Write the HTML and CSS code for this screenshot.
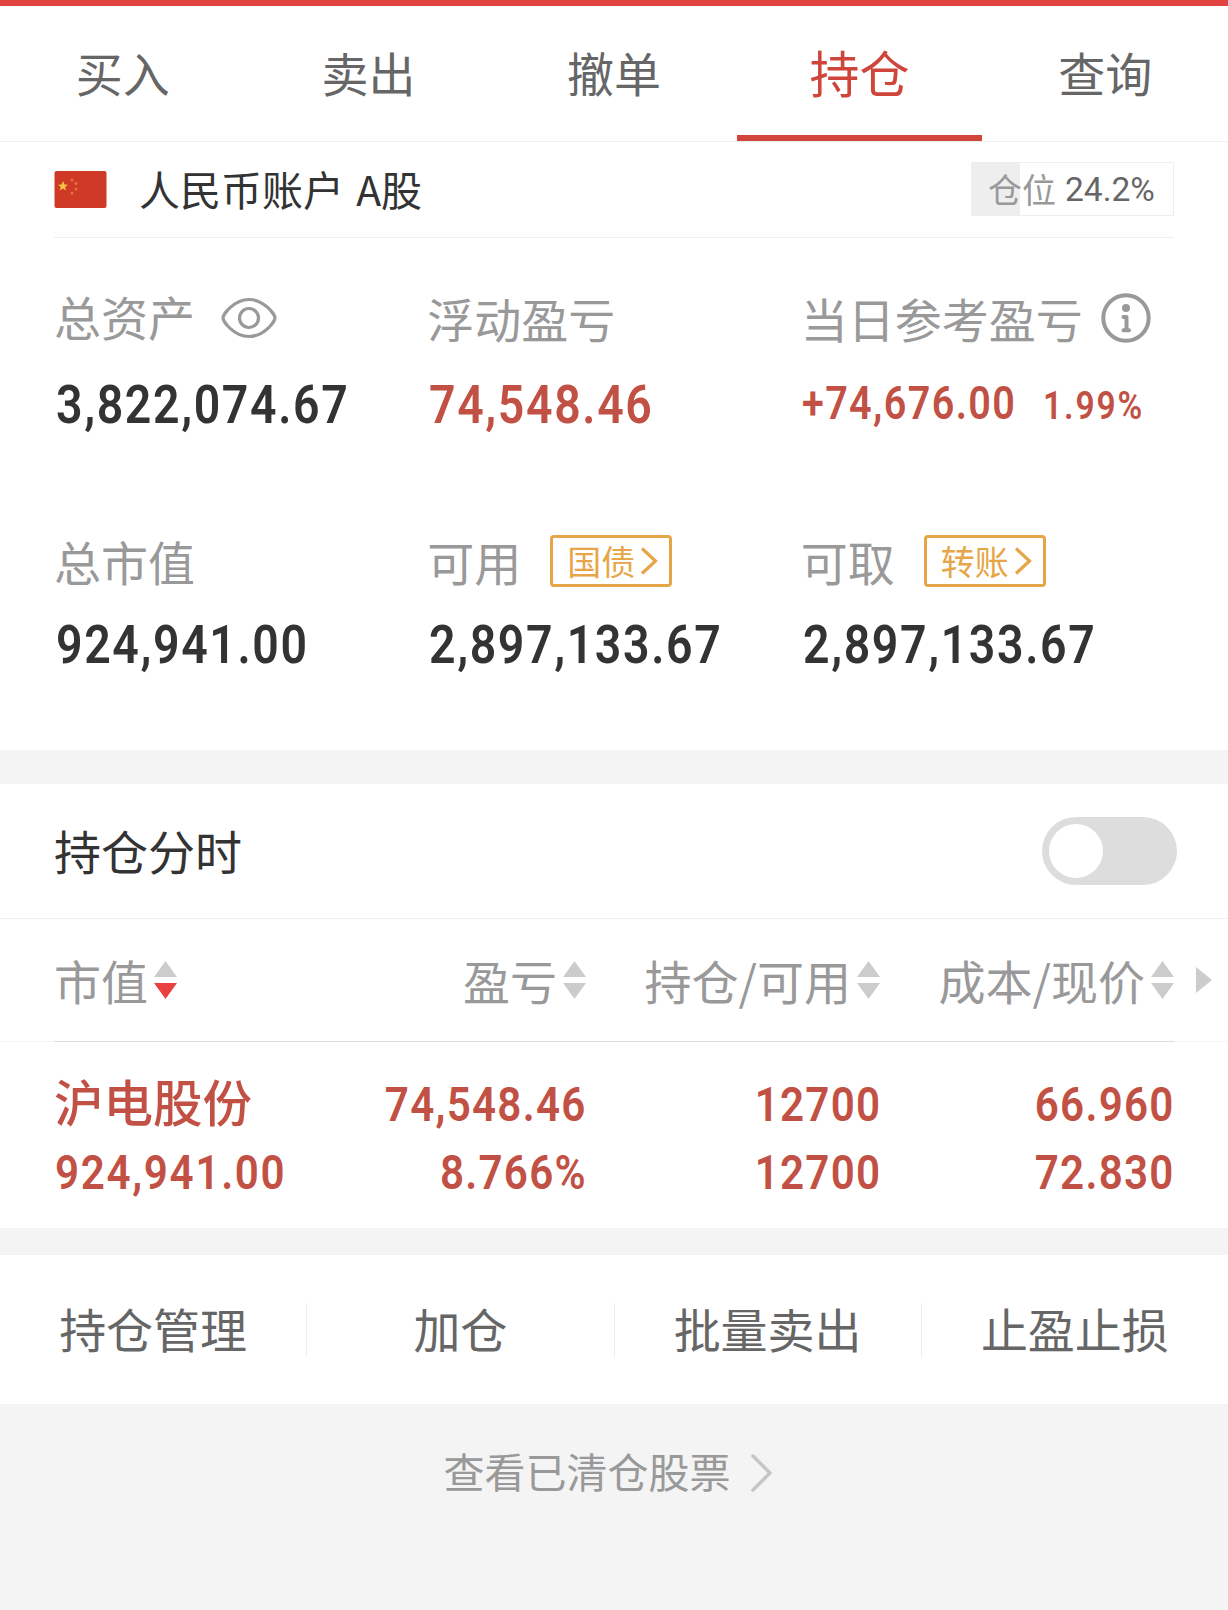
FILE: index.html
```html
<!DOCTYPE html>
<html lang="zh-CN">
<head>
    <meta charset="UTF-8">
    <meta name="viewport" content="width=device-width, initial-scale=1.0">
    <title>持仓</title>
    <link rel="stylesheet" href="styles.css">
</head>
<body>
    <nav class="tabs">
        <a class="tab">买入</a>
        <a class="tab">卖出</a>
        <a class="tab">撤单</a>
        <a class="tab active">持仓</a>
        <a class="tab">查询</a>
    </nav>

    <section class="account">
        <div class="account-head">
            <svg class="flag" viewBox="0 0 52 37">
                <rect width="52" height="37" rx="2" fill="#cf3a26"/>
                <path d="M8.500 10l1.400 3.500 3.600.2-2.800 2.300 1 3.500-3.200-2-3.200 2 1-3.500-2.800-2.300 3.600-.2z" fill="#f6c544"/>
                <g fill="#e2733a">
                    <circle cx="17.5" cy="9" r="1.5"/>
                    <circle cx="21.5" cy="12.5" r="1.5"/>
                    <circle cx="21.5" cy="18" r="1.5"/>
                    <circle cx="17.5" cy="22" r="1.5"/>
                </g>
            </svg>
            <span class="account-name">人民币账户 A股</span>
            <div class="position"><span>仓位</span><b>24.2%</b></div>
        </div>

        <div class="assets">
            <div class="asset">
                <div class="label raised">总资产
                    <svg class="eye" viewBox="0 0 56 42" fill="none" stroke="#999" stroke-width="3.2">
                        <path d="M2 21C2 17.500 13 2.500 28 2.500S54 17.500 54 21S43 39.500 28 39.500S2 24.500 2 21z"/>
                        <circle cx="28" cy="21" r="9.5"/>
                    </svg>
                </div>
                <div class="value"><span class="num">3,822,074.67</span></div>
            </div>
            <div class="asset">
                <div class="label">浮动盈亏</div>
                <div class="value red"><span class="num">74,548.46</span></div>
            </div>
            <div class="asset">
                <div class="label">当日参考盈亏
                    <svg class="info" viewBox="0 0 50 50">
                        <circle cx="25" cy="25" r="22.7" fill="none" stroke="#999" stroke-width="4"/>
                        <circle cx="25" cy="15" r="4" fill="#999"/>
                        <path d="M22.500 24h3v13M22.500 37.200h5.500" fill="none" stroke="#999" stroke-width="4" stroke-linecap="round" stroke-linejoin="round"/>
                    </svg>
                </div>
                <div class="value day red"><span class="num">+74,676.00</span><span class="num rate">1.99%</span></div>
            </div>
            <div class="asset">
                <div class="label">总市值</div>
                <div class="value"><span class="num">924,941.00</span></div>
            </div>
            <div class="asset">
                <div class="label">可用
                    <a class="tag">国债<svg viewBox="0 0 18 28"><path d="M2 1.500l13.500 12.500L2 26.500"/></svg></a>
                </div>
                <div class="value"><span class="num">2,897,133.67</span></div>
            </div>
            <div class="asset">
                <div class="label">可取
                    <a class="tag">转账<svg viewBox="0 0 18 28"><path d="M2 1.500l13.500 12.500L2 26.500"/></svg></a>
                </div>
                <div class="value"><span class="num">2,897,133.67</span></div>
            </div>
        </div>
    </section>

    <section class="holdings">
        <div class="chart-row">
            <span>持仓分时</span>
            <div class="switch"></div>
        </div>

        <div class="grid head">
            <div>市值<i class="sort desc"></i></div>
            <div>盈亏<i class="sort"></i></div>
            <div>持仓/可用<i class="sort"></i></div>
            <div>成本/现价<i class="sort"></i></div>
            <i class="more"></i>
        </div>

        <div class="grid stock">
            <div class="name">沪电股份</div>
            <div><span class="num">74,548.46</span></div>
            <div><span class="num">12700</span></div>
            <div><span class="num">66.960</span></div>
            <div class="amount"><span class="num">924,941.00</span></div>
            <div><span class="num">8.766%</span></div>
            <div><span class="num">12700</span></div>
            <div><span class="num">72.830</span></div>
        </div>
    </section>

    <div class="actions">
        <a>持仓管理</a>
        <a>加仓</a>
        <a>批量卖出</a>
        <a>止盈止损</a>
    </div>

    <a class="cleared">查看已清仓股票
        <svg viewBox="0 0 22 38"><path d="M2 2l17 17L2 36"/></svg>
    </a>
</body>
</html>
```
FILE: styles.css
```css
* { box-sizing: border-box; }
body { margin: 0; background: #f4f4f4; color: #333; font-family: "Noto Sans CJK SC", sans-serif; font-size: 47px; }
svg { display: block; flex: none; }
.red { color: #c25145; }

/* narrow DIN-like digits */
.num { display: inline-block; font-family: Roboto, sans-serif; font-weight: 600; letter-spacing: 0.035em; transform: scaleX(0.86); transform-origin: left center; white-space: nowrap; }

.tabs { display: flex; height: 142px; border-top: 6px solid #e04340; border-bottom: 1px solid #eee; background: #fff; }
.tab { flex: 1; height: 135px; line-height: 132px; text-align: center; color: #666; }
.tab.active { font-size: 50px; line-height: 130px; color: #cf453c; border-bottom: 6px solid #d1453b; }

.account { height: 608px; padding: 0 54px; background: #fff; }
.account-head { display: flex; align-items: center; height: 96px; border-bottom: 1px solid #eee; }
.flag { width: 53px; height: 37px; }
.account-name { margin-left: 32px; padding-bottom: 4px; font-size: 41px; line-height: 90px; word-spacing: 3px; }
.position { display: flex; align-items: center; width: 203px; height: 54px; margin-left: auto; margin-bottom: 2px; padding-left: 16px; border: 1px solid #eee; background: linear-gradient(90deg, #eee 24%, #fff 24%); font-size: 34px; line-height: 48px; color: #999; }
.position b { margin: 2px 0 0 9px; font-family: Roboto, sans-serif; font-weight: 400; font-size: 33.5px; color: #666; }

.assets { display: grid; grid-template-columns: repeat(3, 1fr); row-gap: 101px; padding-top: 50px; }
.label { display: flex; align-items: center; height: 60px; line-height: 60px; color: #999; }
.label.raised { padding-bottom: 4px; }
.eye { width: 56px; height: 42px; margin-left: 26px; margin-top: 4px; }
.info { width: 50px; height: 50px; margin-left: 18px; }
.value { height: 60px; margin-top: 22px; padding-left: 2px; font-size: 54px; line-height: 60px; }
.asset:nth-child(n+4) .value { margin-top: 19px; }
.value.day { display: flex; align-items: baseline; font-size: 46px; line-height: 67px; padding-left: 1px; }
.value .rate { margin-left: -8px; font-size: 39px; letter-spacing: 0.055em; }

.tag { display: flex; align-items: center; width: 122px; height: 52px; margin-left: 29px; padding-left: 14px; border: 3px solid #e6a547; border-radius: 4px; font-size: 34px; line-height: 40px; color: #e6a547; }
.tag svg { width: 18px; height: 28px; margin-left: 5px; fill: none; stroke: #e6a547; stroke-width: 3.2; }

.holdings { margin-top: 34px; background: #fff; }
.chart-row { display: flex; justify-content: space-between; align-items: center; height: 135px; padding: 0 51px 0 54px; border-bottom: 1px solid #eee; line-height: 60px; }
.chart-row span { padding-bottom: 3px; }
.switch { width: 135px; height: 68px; padding: 7px; border-radius: 34px; background: #ddd; }
.switch::before { content: ""; display: block; width: 54px; height: 54px; border-radius: 50%; background: #fff; }

.grid { display: grid; grid-template-columns: 238px repeat(3, 294px); padding-left: 54px; }
.head { grid-template-columns: 238px repeat(3, 294px) 54px; height: 123px; padding-bottom: 1px; align-items: center; background: linear-gradient(#ddd, #ddd) 54px 100% / 1120px 1px no-repeat, linear-gradient(#f4f4f4, #f4f4f4) 0 100% / 100% 1px no-repeat; color: #999; }
.head div { display: flex; align-items: center; justify-content: flex-end; height: 60px; line-height: 56px; }
.head div:first-child { justify-content: flex-start; }
.sort { display: flex; flex-direction: column; gap: 6px; margin-left: 6px; }
.sort::before, .sort::after { content: ""; width: 23px; height: 16px; background: #ccc; }
.sort::before { clip-path: polygon(50% 0, 100% 100%, 0 100%); }
.sort::after { clip-path: polygon(0 0, 100% 0, 50% 100%); }
.sort.desc::after { background: #eb4040; }
.more { width: 16px; height: 26px; margin-left: 22px; background: #ccc; clip-path: polygon(0 0, 100% 50%, 0 100%); }

.stock { height: 186px; padding-top: 24px; grid-auto-rows: 68px; font-size: 49px; line-height: 68px; text-align: right; color: #c25145; }
.stock div:nth-child(4n+1) { text-align: left; }
.stock .name { font-size: 49.5px; font-weight: 500; line-height: 69px; }
.stock .num { margin-right: -0.02em; letter-spacing: 0.03em; }
.stock div:not(:nth-child(4n+1)) .num { transform-origin: right center; }
.stock .amount { padding-left: 1px; }
.stock .amount .num { letter-spacing: 0.04em; }

.actions { display: flex; align-items: center; height: 149px; margin-top: 27px; background: #fff; }
.actions a { flex: 1; height: 54px; line-height: 50px; text-align: center; color: #666; }
.actions a + a { border-left: 1px solid #eee; }

.cleared { display: flex; justify-content: center; align-items: center; height: 132px; padding-right: 12px; font-size: 41px; line-height: 60px; color: #999; }
.cleared svg { width: 22px; height: 38px; margin: 6px 0 0 20px; fill: none; stroke: #c6c6c6; stroke-width: 3.5; stroke-linecap: round; stroke-linejoin: round; }
```
